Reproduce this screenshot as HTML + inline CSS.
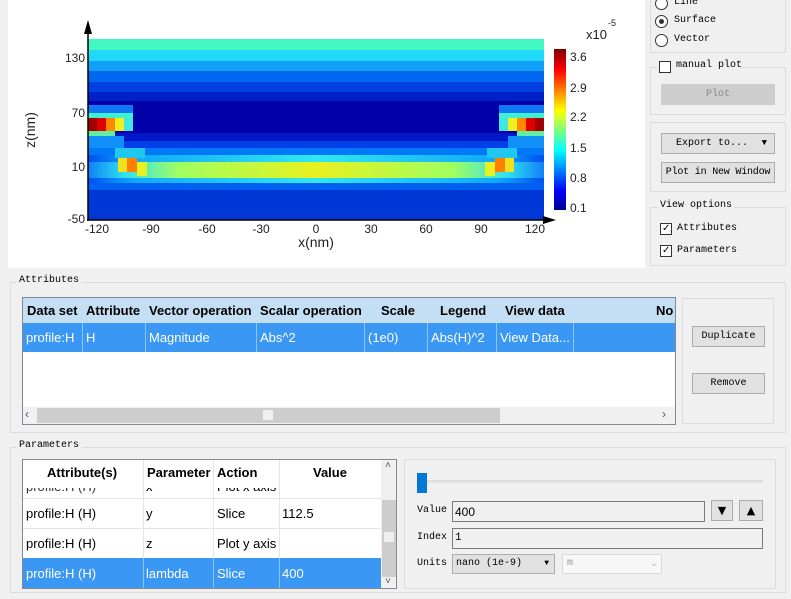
<!DOCTYPE html>
<html><head><meta charset="utf-8"><style>
*{margin:0;padding:0;box-sizing:border-box}
body{width:791px;height:599px;background:#f0f0f0;position:relative;overflow:hidden;font-family:"Liberation Sans",sans-serif}
.a{position:absolute}
.m{font-family:"Liberation Mono",monospace;font-size:10px;color:#000;white-space:nowrap}
.grp{position:absolute;border:1px solid #dcdcdc}
.btn{position:absolute;background:#e1e1e1;border:1px solid #adadad;font-family:"Liberation Mono",monospace;font-size:10px;text-align:center;white-space:nowrap}
.cb{position:absolute;width:12px;height:12px;border:1px solid #333;background:#fff}
.rd{position:absolute;width:13px;height:13px;border:1px solid #333;border-radius:50%;background:#fff}
.t{font-size:13px;white-space:nowrap;position:absolute}
.h{font-weight:bold}
.sel{color:#fff}
.vl{position:absolute;width:1px;background:#e4e4e4}
.vls{position:absolute;width:1px;background:#8cc4f8}
</style></head><body>
<div class="a" style="left:8px;top:0;width:637px;height:268px;background:#fff"></div>
<svg class="a" style="left:0;top:0" width="650" height="268">
<defs>
<linearGradient id="band" x1="0" x2="1" y1="0" y2="0">
<stop offset="0" stop-color="#1080f8"/><stop offset="0.08" stop-color="#30e0f0"/><stop offset="0.2" stop-color="#a0ff60"/><stop offset="0.5" stop-color="#e8f020"/><stop offset="0.8" stop-color="#a0ff60"/><stop offset="0.92" stop-color="#30e0f0"/><stop offset="1" stop-color="#1080f8"/></linearGradient>
<linearGradient id="band2" x1="0" x2="1" y1="0" y2="0">
<stop offset="0" stop-color="#0050f0"/><stop offset="0.1" stop-color="#10a8f8"/><stop offset="0.5" stop-color="#30e8f0"/><stop offset="0.9" stop-color="#10a8f8"/><stop offset="1" stop-color="#0050f0"/></linearGradient>
<linearGradient id="cbar" x1="0" x2="0" y1="1" y2="0">
<stop offset="0" stop-color="#00008f"/><stop offset="0.12" stop-color="#0000ff"/><stop offset="0.37" stop-color="#00ffff"/><stop offset="0.62" stop-color="#ffff00"/><stop offset="0.87" stop-color="#ff0000"/><stop offset="1" stop-color="#800000"/></linearGradient>
</defs>
<rect x="88" y="39" width="456" height="181" fill="#0038d8"/>
<rect x="88" y="39" width="456" height="11" fill="#40f8c0"/>
<rect x="88" y="50" width="456" height="11" fill="#20d8f8"/>
<rect x="88" y="61" width="456" height="10" fill="#10a0f8"/>
<rect x="88" y="71" width="456" height="11" fill="#0068f0"/>
<rect x="88" y="82" width="456" height="10" fill="#0040e0"/>
<rect x="88" y="92" width="456" height="9" fill="#0020c8"/>
<rect x="88" y="101" width="456" height="32" fill="#0000a8"/>
<rect x="88" y="133" width="456" height="8" fill="#0018c8"/>
<rect x="88" y="141" width="456" height="7" fill="#0040e8"/>
<rect x="88" y="148" width="456" height="7" fill="#0078f8"/>
<rect x="88" y="155" width="456" height="7" fill="url(#band2)"/>
<rect x="88" y="162" width="456" height="16" fill="url(#band)"/>
<rect x="88" y="178" width="456" height="5" fill="url(#band2)"/>
<rect x="88" y="183" width="456" height="7" fill="#0060f0"/>
<rect x="88" y="190" width="456" height="30" fill="#0038d8"/>
<rect x="88" y="105" width="45" height="8" fill="#1078f0"/>
<rect x="88" y="113" width="45" height="5" fill="#40f0d0"/>
<rect x="88" y="118" width="9" height="13" fill="#a00000"/><rect x="97" y="118" width="9" height="13" fill="#e00000"/>
<rect x="106" y="118" width="9" height="13" fill="#ff8800"/><rect x="115" y="118" width="9" height="13" fill="#f0f020"/>
<rect x="124" y="118" width="9" height="13" fill="#40e8e0"/>
<rect x="88" y="131" width="27" height="5" fill="#60f0a0"/>
<rect x="88" y="136" width="36" height="12" fill="#1090f8"/>
<rect x="115" y="148" width="30" height="10" fill="#20c8f0"/>
<rect x="118" y="158" width="9" height="14" fill="#f0e020"/><rect x="127" y="158" width="10" height="14" fill="#ff8000"/>
<rect x="137" y="162" width="10" height="14" fill="#e8f020"/>
<rect x="499" y="105" width="45" height="8" fill="#1078f0"/>
<rect x="499" y="113" width="45" height="5" fill="#40f0d0"/>
<rect x="535" y="118" width="9" height="13" fill="#a00000"/><rect x="526" y="118" width="9" height="13" fill="#e00000"/>
<rect x="517" y="118" width="9" height="13" fill="#ff8800"/><rect x="508" y="118" width="9" height="13" fill="#f0f020"/>
<rect x="499" y="118" width="9" height="13" fill="#40e8e0"/>
<rect x="517" y="131" width="27" height="5" fill="#60f0a0"/>
<rect x="508" y="136" width="36" height="12" fill="#1090f8"/>
<rect x="487" y="148" width="30" height="10" fill="#20c8f0"/>
<rect x="505" y="158" width="9" height="14" fill="#f0e020"/><rect x="495" y="158" width="10" height="14" fill="#ff8000"/>
<rect x="485" y="162" width="10" height="14" fill="#e8f020"/>
<line x1="88" y1="28" x2="88" y2="221" stroke="#000" stroke-width="1.5"/>
<polygon points="84,34 92,34 88,20" fill="#000"/>
<line x1="87" y1="220" x2="548" y2="220" stroke="#000" stroke-width="1.5"/>
<polygon points="543,216 543,224 556,220" fill="#000"/>
<rect x="554" y="49" width="12" height="161" fill="url(#cbar)"/>
<g font-family="Liberation Sans" font-size="12" fill="#222">
<text x="85" y="62" text-anchor="end">130</text>
<text x="85" y="117" text-anchor="end">70</text>
<text x="85" y="171" text-anchor="end">10</text>
<text x="85" y="223" text-anchor="end">-50</text>
<text x="97" y="233" text-anchor="middle">-120</text>
<text x="151" y="233" text-anchor="middle">-90</text>
<text x="207" y="233" text-anchor="middle">-60</text>
<text x="261" y="233" text-anchor="middle">-30</text>
<text x="316" y="233" text-anchor="middle">0</text>
<text x="371" y="233" text-anchor="middle">30</text>
<text x="426" y="233" text-anchor="middle">60</text>
<text x="481" y="233" text-anchor="middle">90</text>
<text x="535" y="233" text-anchor="middle">120</text>
<text x="570" y="61">3.6</text><text x="570" y="92">2.9</text><text x="570" y="121">2.2</text>
<text x="570" y="152">1.5</text><text x="570" y="182">0.8</text><text x="570" y="212">0.1</text>
<text x="586" y="39" font-size="13">x10</text><text x="608" y="26" font-size="9">-5</text>
<text x="316" y="247" font-size="14" text-anchor="middle">x(nm)</text>
<text x="35" y="130" font-size="14" text-anchor="middle" transform="rotate(-90 35 130)">z(nm)</text>
</g>
</svg>
<div class="grp" style="left:650px;top:-5px;width:136px;height:58px"></div>
<div class="rd" style="left:655px;top:-3px"></div><div class="a m" style="left:674px;top:-3px">Line</div>
<div class="rd" style="left:655px;top:15px"></div><div class="a" style="left:659px;top:19px;width:5px;height:5px;border-radius:50%;background:#333"></div><div class="a m" style="left:674px;top:15px">Surface</div>
<div class="rd" style="left:655px;top:34px"></div><div class="a m" style="left:674px;top:34px">Vector</div>
<div class="grp" style="left:650px;top:67px;width:136px;height:48px"></div>
<div class="a" style="left:657px;top:60px;width:84px;height:14px;background:#f0f0f0"></div>
<div class="cb" style="left:659px;top:61px"></div><div class="a m" style="left:676px;top:60px">manual plot</div>
<div class="btn" style="left:661px;top:84px;width:114px;height:21px;line-height:19px;color:#888;background:#cdcdcd;border-color:#cdcdcd">Plot</div>
<div class="grp" style="left:650px;top:122px;width:136px;height:70px"></div>
<div class="btn" style="left:661px;top:133px;width:114px;height:21px;line-height:19px;text-align:left;padding-left:14px">Export to...<span style="position:absolute;right:7px;top:0;font-size:9px">▼</span></div>
<div class="btn" style="left:661px;top:162px;width:114px;height:21px;line-height:19px;letter-spacing:-0.2px">Plot in New Window</div>
<div class="grp" style="left:650px;top:207px;width:136px;height:59px"></div>
<div class="a m" style="left:658px;top:200px;background:#f0f0f0;padding:0 2px">View options</div>
<div class="cb" style="left:660px;top:223px"></div><div class="a" style="left:662px;top:223px;font-size:10px">✓</div><div class="a m" style="left:677px;top:223px">Attributes</div>
<div class="cb" style="left:660px;top:245px"></div><div class="a" style="left:662px;top:245px;font-size:10px">✓</div><div class="a m" style="left:677px;top:245px">Parameters</div>

<div class="grp" style="left:10px;top:282px;width:776px;height:151px"></div>
<div class="a m" style="left:16px;top:275px;background:#f0f0f0;padding:0 3px">Attributes</div>
<div class="a" style="left:22px;top:297px;width:654px;height:128px;border:1px solid #828790;background:#fff"></div>
<div class="a" style="left:23px;top:298px;width:652px;height:25px;background:#c4def3"></div>
<div class="a" style="left:23px;top:323px;width:652px;height:29px;background:#3a98f4"></div>
<div class="vls" style="left:82px;top:323px;height:29px"></div>
<div class="vls" style="left:145px;top:323px;height:29px"></div>
<div class="vls" style="left:256px;top:323px;height:29px"></div>
<div class="vls" style="left:364px;top:323px;height:29px"></div>
<div class="vls" style="left:427px;top:323px;height:29px"></div>
<div class="vls" style="left:496px;top:323px;height:29px"></div>
<div class="vls" style="left:573px;top:323px;height:29px"></div>
<div class="t h" style="left:27px;top:303px">Data set</div>
<div class="t h" style="left:86px;top:303px">Attribute</div>
<div class="t h" style="left:149px;top:303px">Vector operation</div>
<div class="t h" style="left:260px;top:303px">Scalar operation</div>
<div class="t h" style="left:381px;top:303px">Scale</div>
<div class="t h" style="left:440px;top:303px">Legend</div>
<div class="t h" style="left:505px;top:303px">View data</div>
<div class="t h" style="left:656px;top:303px">No</div>
<div class="t sel" style="left:26px;top:330px">profile:H</div>
<div class="t sel" style="left:86px;top:330px">H</div>
<div class="t sel" style="left:149px;top:330px">Magnitude</div>
<div class="t sel" style="left:260px;top:330px">Abs^2</div>
<div class="t sel" style="left:368px;top:330px">(1e0)</div>
<div class="t sel" style="left:431px;top:330px">Abs(H)^2</div>
<div class="t sel" style="left:500px;top:330px">View Data...</div>
<div class="a" style="left:23px;top:407px;width:652px;height:17px;background:#f0f0f0"></div>
<div class="a" style="left:37px;top:408px;width:463px;height:15px;background:#cdcdcd"></div>
<div class="a" style="left:263px;top:410px;width:10px;height:10px;background:#f0f0f0"></div>
<div class="a" style="left:25px;top:407px;font-size:12px;color:#555">‹</div>
<div class="a" style="left:662px;top:407px;font-size:12px;color:#555">›</div>
<div class="grp" style="left:682px;top:298px;width:92px;height:126px"></div>
<div class="btn" style="left:692px;top:326px;width:73px;height:21px;line-height:19px">Duplicate</div>
<div class="btn" style="left:692px;top:373px;width:73px;height:21px;line-height:19px">Remove</div>

<div class="grp" style="left:10px;top:447px;width:776px;height:146px"></div>
<div class="a m" style="left:16px;top:440px;background:#f0f0f0;padding:0 3px">Parameters</div>
<div class="a" style="left:22px;top:459px;width:375px;height:130px;border:1px solid #828790;background:#fff;overflow:hidden">
 <div class="a" style="left:0;top:26px;width:358px;height:13px">
  <div class="t" style="left:3px;top:-7px;color:#333">profile:H (H)</div><div class="t" style="left:123px;top:-7px">x</div><div class="t" style="left:194px;top:-7px">Plot x axis</div></div>
 <div class="a" style="left:0;top:0;width:358px;height:28px;background:#fff"></div>
 <div class="a" style="left:0;top:38px;width:358px;height:1px;background:#e4e4e4"></div>
 <div class="a" style="left:0;top:68px;width:358px;height:1px;background:#e4e4e4"></div>
 <div class="a" style="left:0;top:98px;width:358px;height:31px;background:#3a98f4"></div>
 <div class="vl" style="left:120px;top:0;height:98px"></div><div class="vl" style="left:190px;top:0;height:98px"></div><div class="vl" style="left:256px;top:0;height:98px"></div>
 <div class="vls" style="left:120px;top:98px;height:31px"></div><div class="vls" style="left:190px;top:98px;height:31px"></div><div class="vls" style="left:256px;top:98px;height:31px"></div>
 <div class="t h" style="left:24px;top:5px">Attribute(s)</div><div class="t h" style="left:124px;top:5px">Parameter</div><div class="t h" style="left:194px;top:5px">Action</div><div class="t h" style="left:290px;top:5px">Value</div>
 <div class="t" style="left:3px;top:46px">profile:H (H)</div><div class="t" style="left:123px;top:46px">y</div><div class="t" style="left:194px;top:46px">Slice</div><div class="t" style="left:259px;top:46px">112.5</div>
 <div class="t" style="left:3px;top:76px">profile:H (H)</div><div class="t" style="left:123px;top:76px">z</div><div class="t" style="left:194px;top:76px">Plot y axis</div>
 <div class="t sel" style="left:3px;top:106px">profile:H (H)</div><div class="t sel" style="left:123px;top:106px">lambda</div><div class="t sel" style="left:194px;top:106px">Slice</div><div class="t sel" style="left:259px;top:106px">400</div>
 <div class="a" style="left:358px;top:0;width:16px;height:129px;background:#f0f0f0"></div>
 <div class="a" style="left:359px;top:40px;width:14px;height:77px;background:#cdcdcd"></div>
 <div class="a" style="left:361px;top:72px;width:10px;height:10px;background:#f0f0f0"></div>
 <div class="a" style="left:362px;top:0;font-size:10px;color:#555">˄</div>
 <div class="a" style="left:362px;top:116px;font-size:10px;color:#555">˅</div>
</div>
<div class="grp" style="left:404px;top:459px;width:372px;height:130px"></div>
<div class="a" style="left:427px;top:480px;width:336px;height:3px;border:1px solid #dcdcdc;background:#e7e7e7"></div>
<div class="a" style="left:417px;top:473px;width:10px;height:20px;background:#0078d7"></div>
<div class="a m" style="left:417px;top:505px">Value</div>
<div class="a" style="left:452px;top:501px;width:253px;height:21px;border:1px solid #7a7a7a;background:#f0f0f0;font-size:12px;padding:3px 2px">400</div>
<div class="btn" style="left:711px;top:500px;width:22px;height:21px;font-size:11px;line-height:19px;font-family:'DejaVu Sans'">▼</div>
<div class="btn" style="left:739px;top:500px;width:24px;height:21px;font-size:11px;line-height:19px;font-family:'DejaVu Sans'">▲</div>
<div class="a m" style="left:417px;top:532px">Index</div>
<div class="a" style="left:452px;top:528px;width:311px;height:21px;border:1px solid #7a7a7a;background:#f0f0f0;font-size:11px;padding:3px 2px;font-family:'Liberation Mono'">1</div>
<div class="a m" style="left:417px;top:558px">Units</div>
<div class="btn" style="left:452px;top:554px;width:103px;height:20px;line-height:18px;text-align:left;padding-left:3px">nano (1e-9)<span style="position:absolute;right:5px;font-size:8px">▼</span></div>
<div class="a" style="left:562px;top:554px;width:100px;height:20px;border:1px solid #d9d9d9;background:#f7f7f7;font-family:'Liberation Mono';font-size:10px;color:#999;padding:3px 4px">m<span style="position:absolute;right:3px;color:#bbb">⌄</span></div>
</body></html>
